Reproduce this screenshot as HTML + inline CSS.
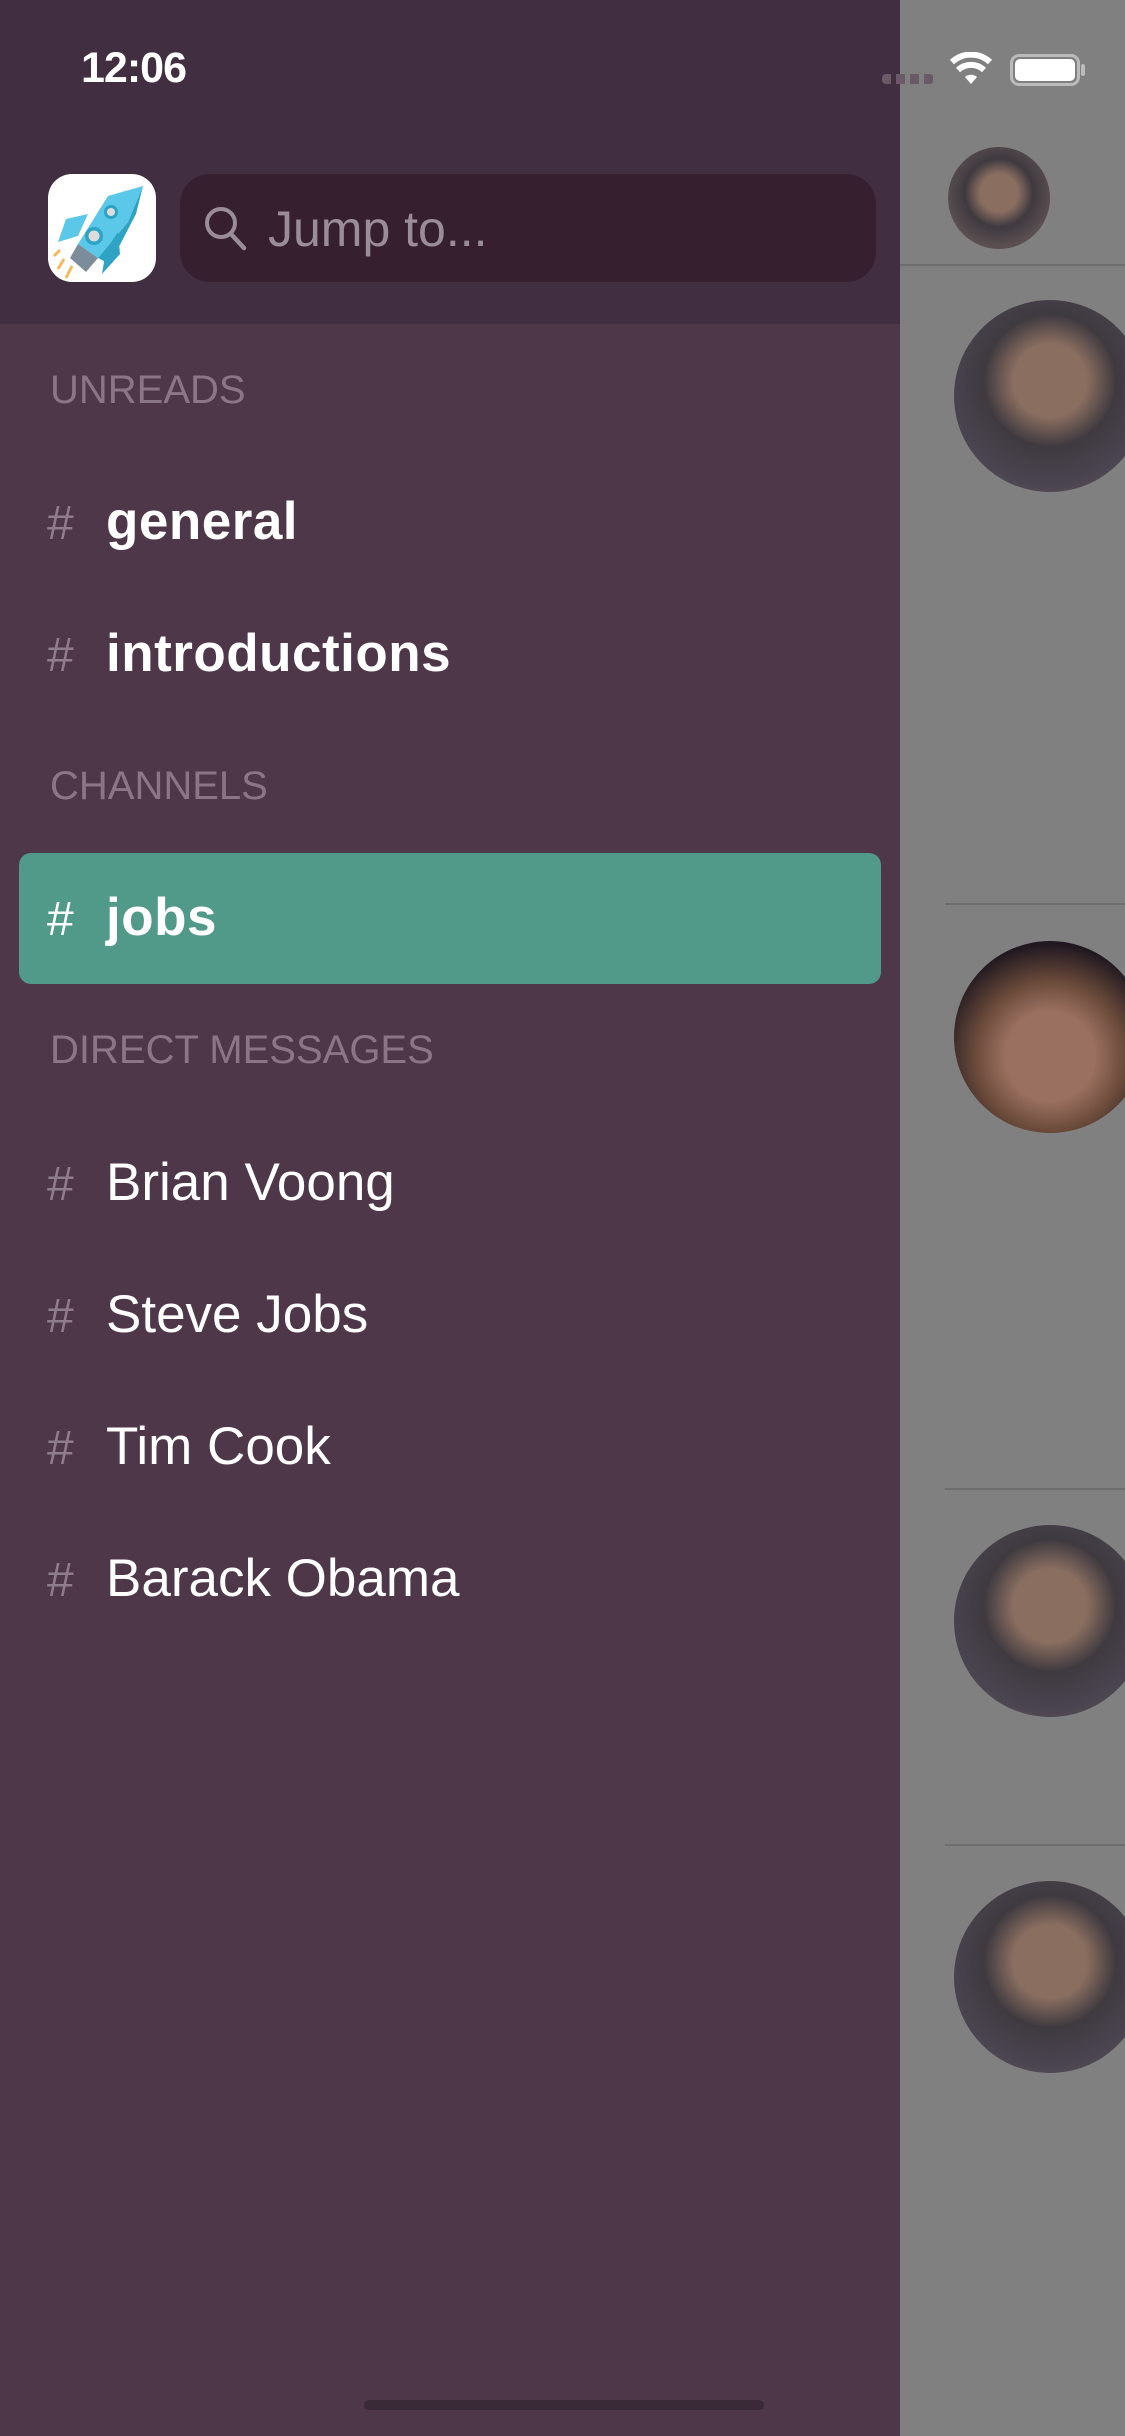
<!DOCTYPE html>
<html><head><meta charset="utf-8"><style>
*{margin:0;padding:0;box-sizing:border-box}
body{width:1125px;height:2436px;position:relative;overflow:hidden;background:#808080;font-family:"Liberation Sans",sans-serif}
.panel{position:absolute;left:0;top:0;width:900px;height:2436px;background:#4f374a}
.hdr{position:absolute;left:0;top:0;width:900px;height:324px;background:#412e40}
.time{position:absolute;left:81px;top:44px;color:#fff;font-size:43px;font-weight:bold;letter-spacing:-1px}
.icon{position:absolute;left:48px;top:174px;width:108px;height:108px;border-radius:24px;background:#fff;overflow:hidden}
.search{position:absolute;left:180px;top:174px;width:696px;height:108px;border-radius:30px;background:#36202f}
.search span{position:absolute;left:88px;top:26px;font-size:50px;color:#9a8d98}
.lbl{position:absolute;left:50px;font-size:40px;color:#8a7686}
.item{position:absolute;left:47px;font-size:53px;color:#fff;line-height:60px}
.item .h{color:#8f7c8c;font-weight:normal;display:inline-block;width:59px;font-size:48px}
.b{font-weight:bold;letter-spacing:0.5px}
.sel{position:absolute;left:19px;top:853px;width:862px;height:131px;border-radius:12px;background:#519a89}
.line{position:absolute;height:2px;background:#6e6e6e;right:0}
.av{position:absolute;border-radius:50%}
</style></head><body>
<div class="panel"></div>
<div class="hdr"></div>
<div class="time">12:06</div>
<div style="position:absolute;left:882px;top:74px;width:52px;height:10px;background:repeating-linear-gradient(90deg,#6a5a68 0 9px,transparent 9px 14px);border-radius:4px"></div>
<svg style="position:absolute;left:950px;top:52px" width="42" height="34" viewBox="0 0 42 34"><path d="M21 32 L27 25 A9 9 0 0 0 15 25Z M21 32" fill="#fff"/><path d="M8 18 A19 19 0 0 1 34 18" stroke="#fff" stroke-width="6" fill="none"/><path d="M2 10 A28 28 0 0 1 40 10" stroke="#fff" stroke-width="6" fill="none"/></svg>
<div style="position:absolute;left:1010px;top:54px;width:70px;height:32px;border:3px solid #bbb;border-radius:9px"></div>
<div style="position:absolute;left:1015px;top:59px;width:60px;height:22px;background:#fff;border-radius:5px"></div>
<div style="position:absolute;left:1081px;top:64px;width:4px;height:12px;background:#bbb;border-radius:2px"></div>
<div class="icon"><svg width="108" height="108" viewBox="0 0 108 108">
<path d="M95 12 L60 22 L30 70 L50 84 L80 48Z" fill="#5bc8ea"/><path d="M95 12 L80 48 L50 84 L62 90 L88 40Z" fill="#2fa3c4"/>
<path d="M40 40 L18 45 L10 68 L30 62Z" fill="#5bc8ea"/><path d="M70 58 L72 80 L54 100 L58 76Z" fill="#2fa3c4"/>
<path d="M30 70 L50 84 L38 98 L22 84Z" fill="#7b8c9a"/>
<circle cx="63" cy="38" r="7" fill="#2fa3c4"/><circle cx="63" cy="38" r="4" fill="#ddd"/>
<circle cx="46" cy="62" r="9" fill="#2fa3c4"/><circle cx="46" cy="62" r="5.5" fill="#ddd"/>
<path d="M16 85 L10 95 M24 92 L18 104 M12 76 L6 82" stroke="#f5b85a" stroke-width="3"/></svg></div>
<div class="search"><svg style="position:absolute;left:22px;top:30px" width="50" height="50" viewBox="0 0 50 50"><circle cx="19" cy="19" r="14" stroke="#9a8d98" stroke-width="4" fill="none"/><path d="M29 30 L42 44" stroke="#9a8d98" stroke-width="4.5" stroke-linecap="round"/></svg><span>Jump to...</span></div>

<div class="lbl" style="top:368px">UNREADS</div>
<div class="item b" style="top:492px"><span class="h">#</span>general</div>
<div class="item b" style="top:624px"><span class="h">#</span>introductions</div>
<div class="lbl" style="top:764px">CHANNELS</div>
<div class="sel"></div>
<div class="item b" style="top:888px"><span class="h" style="color:#fff">#</span>jobs</div>
<div class="lbl" style="top:1028px">DIRECT MESSAGES</div>
<div class="item" style="top:1153px"><span class="h">#</span>Brian Voong</div>
<div class="item" style="top:1285px"><span class="h">#</span>Steve Jobs</div>
<div class="item" style="top:1417px"><span class="h">#</span>Tim Cook</div>
<div class="item" style="top:1549px"><span class="h">#</span>Barack Obama</div>
<div style="position:absolute;left:364px;top:2400px;width:400px;height:10px;border-radius:5px;background:#3a2a37"></div>

<div class="line" style="left:900px;top:264px"></div>
<div class="line" style="left:945px;top:903px"></div>
<div class="line" style="left:945px;top:1488px"></div>
<div class="line" style="left:945px;top:1844px"></div>
<div class="av" style="left:948px;top:147px;width:102px;height:102px;background:radial-gradient(circle at 50% 45%,#8a6e60 0 25%,#3f3a40 45%,#5a4e50 70%,#6a5e62)"></div>
<div class="av" style="left:954px;top:300px;width:192px;height:192px;background:radial-gradient(circle at 50% 42%,#8a6e60 0 25%,#3f3a40 45%,#4a4450 70%,#6a5e62)"></div>
<div class="av" style="left:954px;top:941px;width:192px;height:192px;background:radial-gradient(circle at 50% 60%,#9a7060 0 30%,#6a4a3a 50%,#201820 75%)"></div>
<div class="av" style="left:954px;top:1525px;width:192px;height:192px;background:radial-gradient(circle at 50% 42%,#8a6e60 0 25%,#3f3a40 45%,#4a4450 70%,#6a5e62)"></div>
<div class="av" style="left:954px;top:1881px;width:192px;height:192px;background:radial-gradient(circle at 50% 42%,#8a6e60 0 25%,#3f3a40 45%,#4a4450 70%,#6a5e62)"></div>
</body></html>
